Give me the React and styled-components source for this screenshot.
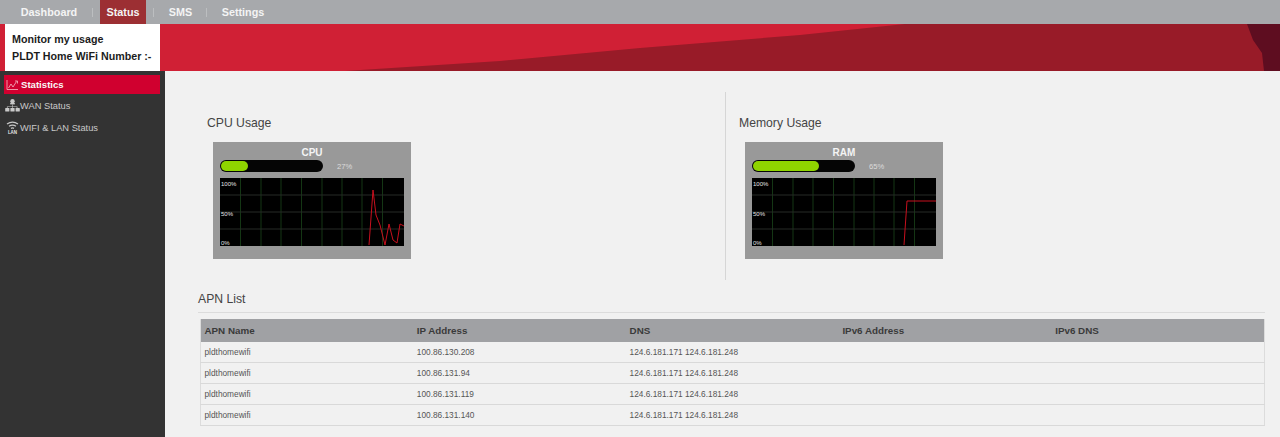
import React from 'react';
import styled, { createGlobalStyle } from 'styled-components';

const GlobalStyle = createGlobalStyle`
  html, body { margin: 0; padding: 0; height: 100%; overflow: hidden; }
  body { font-family: "Liberation Sans", Arial, sans-serif; background: #f1f1f1; }
`;

const Page = styled.div`
  width: 1280px;
  height: 437px;
  display: flex;
  flex-direction: column;
  overflow: hidden;
`;

const TopNav = styled.nav`
  height: 24px;
  flex: none;
  display: flex;
  align-items: stretch;
  padding-left: 21px;
  background: #a7a9ac;
`;

const NavItem = styled.a`
  width: ${props => props.$width}px;
  margin-right: ${props => props.$gap}px;
  display: flex;
  align-items: center;
  justify-content: center;
  font-size: 10.8px;
  font-weight: bold;
  white-space: nowrap;
  color: #f4f4f4;
  background: ${props => (props.$active ? '#9c2f33' : 'transparent')};
`;

const NavSeparator = styled.span`
  width: 1px;
  height: 9px;
  align-self: center;
  margin-right: ${props => props.$gap}px;
  background: #bcbec0;
`;

const Header = styled.header`
  height: 47px;
  flex: none;
  display: flex;
  background: #d02035;
  position: relative;
  overflow: hidden;

  &::before {
    content: '';
    position: absolute;
    inset: 0;
    background: #981b28;
    clip-path: polygon(345px 47px, 500px 37px, 640px 24px, 800px 11px, 905px 0, 1280px 0, 1280px 47px);
  }

  &::after {
    content: '';
    position: absolute;
    top: 0;
    right: 0;
    width: 34px;
    height: 47px;
    background: #5e0d20;
    clip-path: polygon(1px 0, 100% 0, 100% 100%, 18px 100%, 16px 29px, 7px 16px);
  }
`;

const Account = styled.div`
  width: 148px;
  margin-left: 5px;
  padding: 0 0 0 7px;
  display: flex;
  flex-direction: column;
  justify-content: center;
  gap: 5px;
  background: #ffffff;
  position: relative;
  z-index: 1;
  font-size: 10.7px;
  line-height: 12px;
  font-weight: bold;
  white-space: nowrap;
  color: #1c1c1c;
`;

const Body = styled.div`
  flex: 1;
  display: flex;
  min-height: 0;
`;

const Sidebar = styled.aside`
  width: 165px;
  flex: none;
  padding-top: 4px;
  background: #333333;
`;

const SideItem = styled.a`
  width: 156px;
  height: ${props => (props.$active ? 19 : 21)}px;
  margin: 0 0 1px 4px;
  padding-left: ${props => (props.$active ? 2 : 1)}px;
  box-sizing: border-box;
  display: flex;
  align-items: center;
  gap: ${props => (props.$active ? 2 : 0)}px;
  font-size: ${props => (props.$active ? 9.6 : 9.3)}px;
  font-weight: ${props => (props.$active ? 'bold' : 'normal')};
  color: ${props => (props.$active ? '#f8f8f8' : '#c9c9c9')};
  background: ${props => (props.$active ? '#d0002f' : 'transparent')};
`;

const WanLabel = styled.span`
  padding-top: 1px;
`;

const Main = styled.main`
  flex: 1;
  background: #f1f1f1;
  padding: 21px 15px 0 33px;
`;

const Monitors = styled.div`
  height: 188px;
  display: grid;
  grid-template-columns: 528px 1fr;
`;

const Monitor = styled.section`
  padding: 24px 0 0 ${props => props.$inset}px;
  border-right: ${props => (props.$divided ? '1px solid #d6d6d6' : 'none')};
`;

const MonitorTitle = styled.h3`
  margin: 0 0 12px 0;
  font-size: 12.2px;
  line-height: 14px;
  font-weight: normal;
  color: #444444;
`;

const MonitorCard = styled.div`
  width: 198px;
  height: 117px;
  margin-left: 6px;
  padding: 5px 7px 0 7px;
  box-sizing: border-box;
  background: #999999;
`;

const CardName = styled.div`
  height: 12px;
  line-height: 12px;
  text-align: center;
  font-size: 10px;
  font-weight: bold;
  color: #f4f4f4;
`;

const BarRow = styled.div`
  height: 12px;
  margin: 1px 0 6px 0;
  display: flex;
  align-items: center;
  gap: 14px;
`;

const BarTrack = styled.div`
  width: 103px;
  height: 12px;
  padding: 1px;
  box-sizing: border-box;
  border-radius: 6px;
  background: #050505;
`;

const BarFill = styled.div`
  height: 100%;
  border-radius: 5px;
  background: #8fd400;
`;

const BarValue = styled.span`
  font-size: 7.6px;
  color: #dcdcdc;
`;

const Section = styled.section`
  margin-top: 12px;
`;

const SectionTitle = styled.h3`
  margin: 0;
  padding-bottom: 6px;
  border-bottom: 1px solid #dcdcdc;
  font-size: 12.2px;
  line-height: 14px;
  font-weight: normal;
  color: #444444;
`;

const Table = styled.table`
  width: 1065px;
  margin: 6px 0 0 2px;
  border-collapse: collapse;
  table-layout: fixed;
  border-left: 1px solid #dcdcdc;
  border-right: 1px solid #dcdcdc;
`;

const HeadCell = styled.th`
  height: 23px;
  padding: 0 0 0 3.5px;
  text-align: left;
  font-size: 9.8px;
  font-weight: bold;
  color: #3a3a3a;
  background: #a0a1a4;
`;

const Row = styled.tr`
  border-bottom: 1px solid #d9d9d9;
`;

const Cell = styled.td`
  height: 20px;
  padding: 0 0 0 3.5px;
  font-size: 8.3px;
  color: #555555;
`;

const ChartIcon = () => (
  <svg width="13" height="12" viewBox="0 0 13 12" fill="none" stroke="#f2a6b6" strokeWidth="0.9">
    <path d="M1 1v9.5h11" />
    <path d="M2.5 9l2.5-4 2 3L10.5 2.5" />
    <path d="M9 2h2.5v2.5" />
  </svg>
);

const WanIcon = () => (
  <svg width="15" height="13" viewBox="0 0 15 13" fill="#c9c9c9">
    <circle cx="7.5" cy="2.2" r="2.2" />
    <rect x="5.2" y="4" width="4.6" height="1.4" />
    <path d="M7.2 5.4h.6v2h4.6v1.6h-.7V8H7.8v1h-.6V8H2.6v1h-.7V7.4h5.3z" />
    <rect x="0.2" y="9" width="4.2" height="3.6" rx="0.6" />
    <rect x="5.4" y="9" width="4.2" height="3.6" rx="0.6" />
    <rect x="10.6" y="9" width="4.2" height="3.6" rx="0.6" />
  </svg>
);

const WifiIcon = () => (
  <svg width="15" height="14" viewBox="0 0 15 14" fill="none" stroke="#c9c9c9" strokeWidth="1.3">
    <path d="M2 3q5.5-3.6 11 0" />
    <path d="M4 5.2q3.5-2.2 7 0" />
    <path d="M6 7.4q1.5-1 3 0" />
    <text x="7.5" y="13.2" fontSize="4.5" fontWeight="bold" textAnchor="middle" fill="#e4e4e4" stroke="none">LAN</text>
  </svg>
);

const GRID_X = [20.5, 41, 61, 81.5, 102, 122, 142, 162.5];
const GRID_Y = [17, 34, 51];

const UsageChart = ({ points }) => (
  <svg width="184" height="68" viewBox="0 0 184 68" style={{ display: 'block' }}>
    <rect width="184" height="68" fill="#000" />
    {GRID_X.map(x => <line key={x} x1={x} x2={x} y1="0" y2="68" stroke="#143614" />)}
    {GRID_Y.map(y => <line key={y} x1="0" x2="184" y1={y} y2={y} stroke="#262b26" />)}
    <polyline points={points} fill="none" stroke="#c8101e" strokeWidth="1" />
    <g fill="#e4e4e4" fontSize="6" fontFamily="Liberation Sans, sans-serif">
      <text x="1" y="7.5">100%</text>
      <text x="1" y="37.5">50%</text>
      <text x="1" y="66.5">0%</text>
    </g>
  </svg>
);

const monitors = [
  {
    title: 'CPU Usage', name: 'CPU', value: 27, inset: 9, divided: true,
    points: '149,67 153,12 156,37 160,47 165,67 169,46 173,62 177,65 180,46 184,48',
  },
  {
    title: 'Memory Usage', name: 'RAM', value: 65, inset: 13, divided: false,
    points: '152,67 153,52 155,23 184,23',
  },
];

const apns = ['100.86.130.208', '100.86.131.94', '100.86.131.119', '100.86.131.140'];

export default function App() {
  return (
    <Page>
      <GlobalStyle />
      <TopNav>
        <NavItem $width={56} $gap={15}>Dashboard</NavItem>
        <NavSeparator $gap={7} />
        <NavItem $width={46} $active $gap={7}>Status</NavItem>
        <NavSeparator $gap={15} />
        <NavItem $width={23} $gap={14}>SMS</NavItem>
        <NavSeparator $gap={15} />
        <NavItem $width={42} $gap={0}>Settings</NavItem>
      </TopNav>
      <Header>
        <Account>
          <div>Monitor my usage</div>
          <div>PLDT Home WiFi Number :-</div>
        </Account>
      </Header>
      <Body>
        <Sidebar>
          <SideItem $active><ChartIcon />Statistics</SideItem>
          <SideItem><WanIcon /><WanLabel>WAN Status</WanLabel></SideItem>
          <SideItem><WifiIcon />WIFI &amp; LAN Status</SideItem>
        </Sidebar>
        <Main>
          <Monitors>
            {monitors.map(m => (
              <Monitor key={m.name} $inset={m.inset} $divided={m.divided}>
                <MonitorTitle>{m.title}</MonitorTitle>
                <MonitorCard>
                  <CardName>{m.name}</CardName>
                  <BarRow>
                    <BarTrack>
                      <BarFill style={{ width: `${m.value}%` }} />
                    </BarTrack>
                    <BarValue>{m.value}%</BarValue>
                  </BarRow>
                  <UsageChart points={m.points} />
                </MonitorCard>
              </Monitor>
            ))}
          </Monitors>
          <Section>
            <SectionTitle>APN List</SectionTitle>
            <Table>
              <thead>
                <tr>
                  <HeadCell>APN Name</HeadCell>
                  <HeadCell>IP Address</HeadCell>
                  <HeadCell>DNS</HeadCell>
                  <HeadCell>IPv6 Address</HeadCell>
                  <HeadCell>IPv6 DNS</HeadCell>
                </tr>
              </thead>
              <tbody>
                {apns.map(ip => (
                  <Row key={ip}>
                    <Cell>pldthomewifi</Cell>
                    <Cell>{ip}</Cell>
                    <Cell>124.6.181.171 124.6.181.248</Cell>
                    <Cell />
                    <Cell />
                  </Row>
                ))}
              </tbody>
            </Table>
          </Section>
        </Main>
      </Body>
    </Page>
  );
}
